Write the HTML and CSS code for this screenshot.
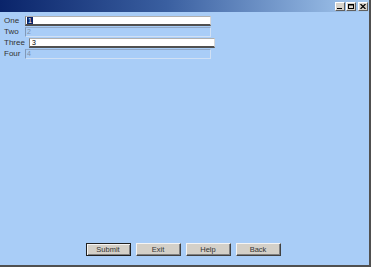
FILE: index.html
```html
<!DOCTYPE html>
<html>
<head>
<meta charset="utf-8">
<link rel="stylesheet" href="styles.css">
</head>
<body>
<div class="window">
  <div class="titlebar">
    <div class="controls">
      <span class="ctl"><svg width="6" height="5" viewBox="0 0 6 5"><rect x="0" y="4" width="5" height="1" fill="#000"/></svg></span>
      <span class="ctl"><svg width="6" height="5" viewBox="0 0 6 5"><rect x="0.5" y="0.5" width="5" height="4" fill="none" stroke="#000"/><rect x="0" y="0" width="6" height="1.5" fill="#000"/></svg></span>
      <span class="ctl close"><svg width="6" height="5" viewBox="0 0 6 5"><path d="M0.5 0 L5.5 5 M5.5 0 L0.5 5" stroke="#000" stroke-width="1.2"/></svg></span>
    </div>
  </div>
  <div class="content">
    <div class="form">
      <div class="row"><span class="label">One</span><span class="field"><span class="sel">1</span></span></div>
      <div class="row"><span class="label">Two</span><span class="field disabled">2</span></div>
      <div class="row"><span class="label">Three</span><span class="field"><span class="val">3</span></span></div>
      <div class="row"><span class="label">Four</span><span class="field disabled">4</span></div>
    </div>
    <div class="buttons">
      <span class="btn default">Submit</span>
      <span class="btn">Exit</span>
      <span class="btn">Help</span>
      <span class="btn">Back</span>
    </div>
  </div>
</div>
</body>
</html>
```
FILE: styles.css
```css
html, body {
  margin: 0;
  padding: 0;
  background: #a9cdf7;
}
.window {
  width: 371px;
  height: 267px;
  box-sizing: border-box;
  display: flex;
  flex-direction: column;
  background: #a9cdf7;
  border-right: 2px solid #505050;
  border-bottom: 2px solid #505050;
  font-family: "Liberation Sans", Arial, sans-serif;
}
.titlebar {
  height: 12px;
  flex: none;
  box-sizing: border-box;
  background: linear-gradient(to right, #0a246a 0%, #3a5fa0 45%, #a6caf0 100%);
  display: flex;
  justify-content: flex-end;
  align-items: flex-start;
  padding-top: 2px;
  padding-right: 1px;
}
.controls {
  display: flex;
  gap: 1px;
}
.ctl {
  width: 10px;
  height: 9px;
  box-sizing: border-box;
  background: #d8d4cc;
  border-top: 1px solid #fff;
  border-left: 1px solid #fff;
  border-right: 1px solid #606060;
  border-bottom: 1px solid #606060;
  display: flex;
  align-items: center;
  justify-content: center;
}
.ctl svg { display: block; }
.close { margin-left: 1px; }
.content {
  flex: 1;
  display: flex;
  flex-direction: column;
  justify-content: space-between;
  padding: 3px 0 9px 0;
}
.form {
  display: flex;
  flex-direction: column;
  padding-left: 4px;
}
.row {
  display: flex;
  align-items: center;
  height: 11px;
}
.label {
  box-sizing: border-box;
  min-width: 21px;
  padding-right: 4px;
  font-size: 8px;
  color: #333;
  line-height: 11px;
}
.field {
  width: 186px;
  height: 10px;
  box-sizing: border-box;
  background: #fff;
  border-top: 1px solid #b0b0b0;
  border-left: 1px solid #808080;
  border-right: 1px solid #d8d8d8;
  border-bottom: 2px solid #505050;
  font-size: 7px;
  line-height: 7px;
  padding-left: 1px;
  color: #000;
  display: flex;
  align-items: center;
}
.field.disabled {
  background: #a9cdf7;
  color: #8090a8;
  border-top: 1px solid #90a8c8;
  border-left: 1px solid #8098b8;
  border-right: 1px solid #d0e0f4;
  border-bottom: 1px solid #d0e0f4;
}
.sel {
  background: #0a246a;
  color: #fff;
  padding: 0 1px;
  line-height: 7px;
}
.val {
  padding-left: 1px;
  color: #000;
}
.buttons {
  display: flex;
  justify-content: center;
  gap: 5px;
  padding-right: 3px;
}
.btn {
  width: 45px;
  height: 13px;
  box-sizing: border-box;
  background: #d4d0c8;
  border-top: 1px solid #f4f4f4;
  border-left: 1px solid #f4f4f4;
  border-right: 1px solid #404040;
  border-bottom: 1px solid #404040;
  box-shadow: inset -1px -1px 0 #808080;
  font-size: 7.5px;
  color: #333;
  display: flex;
  align-items: center;
  justify-content: center;
}
.btn.default {
  border: 1px solid #202020;
  box-shadow: inset 1px 1px 0 #f4f4f4, inset -1px -1px 0 #808080;
}
```
